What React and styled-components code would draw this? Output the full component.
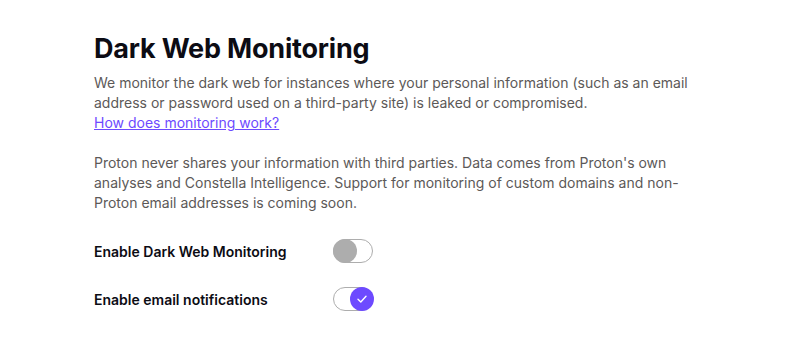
import React, { useState } from 'react';
import styled, { createGlobalStyle } from 'styled-components';

const GlobalStyle = createGlobalStyle`
  body {
    margin: 0;
    background: #ffffff;
    font-family: Inter, "Noto Sans", sans-serif;
    color: #0c0c14;
  }
`;

const Section = styled.section`
  padding: 29px 0 0 94px;
  max-width: 600px;
`;

const Title = styled.h2`
  margin: 0 0 4px;
  font-size: 27px;
  line-height: 40px;
  font-weight: 700;
  letter-spacing: -0.2px;
  color: #0c0c14;
`;

const Text = styled.p`
  margin: 0 0 20px;
  font-size: 14px;
  line-height: 20px;
  color: #5c5958;
`;

const Link = styled.a`
  color: #6d4aff;
  text-decoration: underline;
  cursor: pointer;
`;

const Rows = styled.div`
  display: flex;
  flex-direction: column;
  gap: 24px;
  margin-top: 26px;
`;

const Row = styled.label`
  display: flex;
  align-items: center;
`;

const Label = styled.span`
  width: 239px;
  font-size: 14px;
  font-weight: 600;
  color: #0c0c14;
`;

const Track = styled.span`
  position: relative;
  display: inline-block;
  width: 40px;
  height: 24px;
  box-sizing: border-box;
  border: 1px solid #adadad;
  border-radius: 12px;
  background: #ffffff;
  cursor: pointer;
`;

const Knob = styled.span`
  position: absolute;
  top: -1px;
  left: ${({ $on }) => ($on ? '16px' : '-1px')};
  width: 24px;
  height: 24px;
  border-radius: 50%;
  background: ${({ $on }) => ($on ? '#6d4aff' : '#adadad')};
  display: flex;
  align-items: center;
  justify-content: center;
`;

const Toggle = ({ on, onChange }) => (
  <Track onClick={onChange}>
    <Knob $on={on}>
      {on && (
        <svg width="14" height="14" viewBox="0 0 14 14" fill="none">
          <path d="M3 7.3 L5.8 10 L11 4.2" stroke="#fff" strokeWidth="1.4" strokeLinecap="round" strokeLinejoin="round" />
        </svg>
      )}
    </Knob>
  </Track>
);

export default function App() {
  const [monitoring, setMonitoring] = useState(false);
  const [notify, setNotify] = useState(true);
  return (
    <>
      <GlobalStyle />
      <Section>
        <Title>Dark Web Monitoring</Title>
        <Text>
          We monitor the dark web for instances where your personal information (such as an email
          address or password used on a third-party site) is leaked or compromised.
          <br />
          <Link>How does monitoring work?</Link>
        </Text>
        <Text>
          Proton never shares your information with third parties. Data comes from Proton's own
          analyses and Constella Intelligence. Support for monitoring of custom domains and
          non-Proton email addresses is coming soon.
        </Text>
        <Rows>
          <Row>
            <Label>Enable Dark Web Monitoring</Label>
            <Toggle on={monitoring} onChange={() => setMonitoring(!monitoring)} />
          </Row>
          <Row>
            <Label>Enable email notifications</Label>
            <Toggle on={notify} onChange={() => setNotify(!notify)} />
          </Row>
        </Rows>
      </Section>
    </>
  );
}
